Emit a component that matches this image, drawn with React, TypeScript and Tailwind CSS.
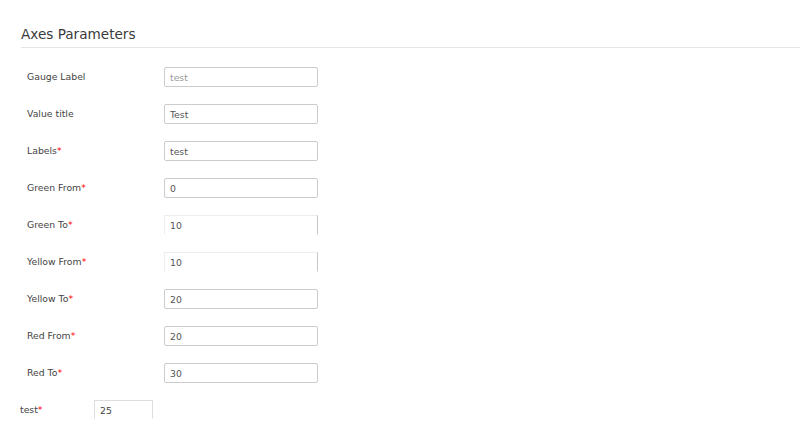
import React from 'react';

type Field = {
  label: string;
  value: string;
  required?: boolean;
  faded?: boolean;
  open?: boolean;
};

const fields: Field[] = [
  { label: 'Gauge Label', value: 'test', faded: true },
  { label: 'Value title', value: 'Test' },
  { label: 'Labels', value: 'test', required: true },
  { label: 'Green From', value: '0', required: true },
  { label: 'Green To', value: '10', required: true, open: true },
  { label: 'Yellow From', value: '10', required: true, open: true },
  { label: 'Yellow To', value: '20', required: true },
  { label: 'Red From', value: '20', required: true },
  { label: 'Red To', value: '30', required: true },
];

const App: React.FC = () => {
  return (
    <div
      className="w-[800px] h-[443px] overflow-hidden bg-white text-[#333]"
      style={{ fontFamily: '"DejaVu Sans", Verdana, sans-serif' }}
    >
      <div className="pl-[21px] pt-[26px]">
        {/* Heading */}
        <div className="border-b border-[#e5e5e5] pb-[5px]">
          <h2 className="text-[13.6px] leading-[16px] font-normal text-[#3a3a3a]">Axes Parameters</h2>
        </div>

        {/* Fields */}
        <div className="mt-[19px] flex flex-col gap-[17px]">
          {fields.map((f) => (
            <div key={f.label} className="flex items-center">
              <label className="ml-[6px] w-[137px] text-[9.3px] leading-[12px] text-[#444]">
                {f.label}
                {f.required && <span className="text-[#f00]">*</span>}
              </label>
              <input
                readOnly
                value={f.value}
                className={
                  f.open
                    ? 'w-[154px] h-[20px] pl-[5px] pt-[1px] text-[9.3px] text-[#555] bg-white border border-[#eee] border-r-[#c8c8c8] border-b-transparent outline-none'
                    : 'w-[154px] h-[20px] pl-[5px] pt-[1px] text-[9.3px] bg-white border border-[#ccc] rounded-[2px] outline-none ' +
                      (f.faded ? 'text-[#999]' : 'text-[#555]')
                }
                style={{ fontFamily: '"DejaVu Sans", Verdana, sans-serif' }}
              />
            </div>
          ))}

          {/* Extra field */}
          <div className="-ml-[1px] flex items-center">
            <label className="w-[74px] text-[9.3px] leading-[12px] text-[#444]">
              test<span className="text-[#f00]">*</span>
            </label>
            <input
              readOnly
              value="25"
              className="w-[59px] h-[19px] pl-[5px] pt-[2px] text-[9.3px] text-[#444] bg-white border border-[#ddd] border-b-transparent outline-none"
              style={{ fontFamily: '"DejaVu Sans", Verdana, sans-serif' }}
            />
          </div>
        </div>
      </div>
    </div>
  );
};

export default App;
